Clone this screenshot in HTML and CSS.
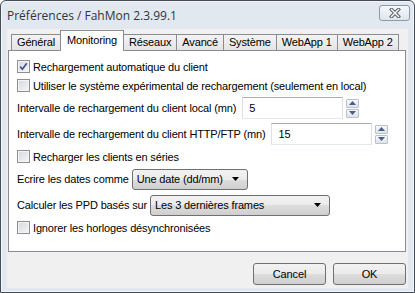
FILE: index.html
```html
<!DOCTYPE html>
<html lang="fr">
<head>
    <meta charset="UTF-8">
    <title>Préférences / FahMon 2.3.99.1</title>
    <link rel="stylesheet" href="styles.css">
</head>
<body>
    <div class="window">
        <div class="titlebar">
            <span class="title">Préférences / FahMon 2.3.99.1</span>
            <span class="close">
                <svg width="12" height="10" viewBox="0 0 12 10">
                    <path d="M2.5 1.5 L9.5 8.5 M9.5 1.5 L2.5 8.5" stroke="#535d6c" stroke-width="3.4" stroke-linecap="square"/>
                    <path d="M2.5 1.5 L9.5 8.5 M9.5 1.5 L2.5 8.5" stroke="#ffffff" stroke-width="1.4" stroke-linecap="square"/>
                </svg>
            </span>
        </div>
        <div class="client">
            <div class="tabs">
                <span class="tab">Général</span>
                <span class="tab active">Monitoring</span>
                <span class="tab">Réseaux</span>
                <span class="tab">Avancé</span>
                <span class="tab">Système</span>
                <span class="tab">WebApp 1</span>
                <span class="tab">WebApp 2</span>
            </div>
            <div class="panel">
                <div class="check-row">
                    <span class="checkbox">
                        <svg width="9" height="9" viewBox="0 0 9 9"><path d="M1.2 4.6 L3.4 7.2 L7.8 1.2" fill="none" stroke="#3d5290" stroke-width="1.7"/></svg>
                    </span>
                    Rechargement automatique du client
                </div>
                <div class="check-row">
                    <span class="checkbox"></span>
                    Utiliser le système expérimental de rechargement (seulement en local)
                </div>
                <div class="field-row">
                    <span class="label">Intervalle de rechargement du client local (mn)</span>
                    <span class="textbox">5</span>
                    <span class="spin">
                        <span class="spin-btn"><svg width="7" height="4" viewBox="0 0 7 4"><path d="M0 4 L3.5 0 L7 4 Z" fill="#4b5f86"/></svg></span>
                        <span class="spin-btn"><svg width="7" height="4" viewBox="0 0 7 4"><path d="M0 0 L7 0 L3.5 4 Z" fill="#4b5f86"/></svg></span>
                    </span>
                </div>
                <div class="field-row">
                    <span class="label">Intervalle de rechargement du client HTTP/FTP (mn)</span>
                    <span class="textbox">15</span>
                    <span class="spin">
                        <span class="spin-btn"><svg width="7" height="4" viewBox="0 0 7 4"><path d="M0 4 L3.5 0 L7 4 Z" fill="#4b5f86"/></svg></span>
                        <span class="spin-btn"><svg width="7" height="4" viewBox="0 0 7 4"><path d="M0 0 L7 0 L3.5 4 Z" fill="#4b5f86"/></svg></span>
                    </span>
                </div>
                <div class="check-row">
                    <span class="checkbox"></span>
                    Recharger les clients en séries
                </div>
                <div class="field-row">
                    <span class="label combo-label">Ecrire les dates comme</span>
                    <span class="combo combo-date">
                        Une date (dd/mm)
                        <svg width="7" height="4" viewBox="0 0 7 4"><path d="M0 0 L7 0 L3.5 4 Z" fill="#000"/></svg>
                    </span>
                </div>
                <div class="field-row">
                    <span class="label combo-label">Calculer les PPD basés sur</span>
                    <span class="combo combo-ppd">
                        Les 3 dernières frames
                        <svg width="7" height="4" viewBox="0 0 7 4"><path d="M0 0 L7 0 L3.5 4 Z" fill="#000"/></svg>
                    </span>
                </div>
                <div class="check-row">
                    <span class="checkbox"></span>
                    Ignorer les horloges désynchronisées
                </div>
            </div>
            <div class="buttons">
                <span class="btn">Cancel</span>
                <span class="btn">OK</span>
            </div>
        </div>
    </div>
</body>
</html>
```

FILE: styles.css
```css
body {
    margin: 0;
    font-family: "Liberation Sans", Arial, sans-serif;
    font-size: 11px;
    letter-spacing: -0.15px;
    color: #000;
    background: #fff;
}
.window {
    width: 415px;
    height: 293px;
    box-sizing: border-box;
    border: 1px solid #434c58;
    border-radius: 6px 6px 0 0;
    background: #e1e8f0;
    box-shadow: inset 0 0 0 1px #f4f7fa;
    padding: 0 6px 4px 6px;
    display: flex;
    flex-direction: column;
}
.titlebar {
    height: 28px;
    display: flex;
    justify-content: space-between;
    align-items: flex-start;
}
.title {
    font-family: "Open Sans", "Liberation Sans", sans-serif;
    font-size: 12px;
    letter-spacing: 0;
    color: #30353c;
    margin-top: 6px;
}
.close {
    width: 31px;
    height: 16px;
    box-sizing: border-box;
    margin-top: 4px;
    margin-right: -2px;
    border: 1px solid #8d98a8;
    border-radius: 3px;
    background: linear-gradient(#f6f8fb, #dfe5ec);
    display: flex;
    align-items: center;
    justify-content: center;
}
.client {
    flex: 1;
    background: #f0f0f0;
    padding: 1px 2px 0 1px;
    display: flex;
    flex-direction: column;
}
.tabs {
    height: 21px;
    display: flex;
    align-items: flex-end;
    padding-left: 4px;
    margin-bottom: -1px;
    position: relative;
    z-index: 1;
}
.tab {
    flex-shrink: 0;
    white-space: nowrap;
    height: 15px;
    line-height: 15px;
    padding: 0 5px;
    margin-bottom: 1px;
    border: 1px solid #898c95;
    border-bottom: none;
    background: linear-gradient(#f3f3f3, #e4e4e4);
    margin-left: -1px;
}
.tab.active {
    height: 20px;
    line-height: 19px;
    margin-bottom: 0;
    padding: 0 6px;
    background: #fff;
    position: relative;
    z-index: 2;
}
.panel {
    height: 202px;
    box-sizing: border-box;
    border: 1px solid #898c95;
    background: #fff;
    padding: 6px 0 0 8px;
}
.check-row {
    height: 19px;
    display: flex;
    align-items: center;
}
.checkbox {
    width: 13px;
    height: 13px;
    box-sizing: border-box;
    border: 1px solid #8e8f8f;
    background: linear-gradient(135deg, #d4d7dc, #f7f7f7);
    box-shadow: inset 0 0 0 1px #f4f4f4;
    margin-right: 3px;
    display: flex;
    align-items: center;
    justify-content: center;
}
.field-row {
    height: 26px;
    display: flex;
    align-items: center;
}
.label {
    margin-right: 6px;
}
.combo-label {
    margin-right: 3px;
}
.textbox {
    width: 101px;
    height: 22px;
    box-sizing: border-box;
    border: 1px solid #dbdfe6;
    border-top-color: #abadb3;
    border-bottom-color: #e3e9ef;
    padding-left: 6px;
    line-height: 20px;
    background: #fff;
}
.spin {
    margin-left: 3px;
    display: flex;
    flex-direction: column;
    gap: 1px;
}
.spin-btn {
    width: 13px;
    height: 9px;
    box-sizing: border-box;
    border: 1px solid #b9c1cc;
    border-radius: 1px;
    background: linear-gradient(#f5f7fa, #dfe4eb);
    display: flex;
    align-items: center;
    justify-content: center;
}
.combo {
    height: 21px;
    box-sizing: border-box;
    border: 1px solid #707070;
    border-radius: 3px;
    background: linear-gradient(#f2f2f2, #ebebeb 50%, #dddddd 50%, #cfcfcf);
    padding: 0 8px 0 4px;
    display: flex;
    align-items: center;
    justify-content: space-between;
}
.combo-date {
    width: 116px;
}
.combo-ppd {
    width: 180px;
}
.buttons {
    margin-top: 11px;
    display: flex;
    justify-content: flex-end;
    gap: 7px;
}
.btn {
    width: 73px;
    height: 22px;
    box-sizing: border-box;
    border: 1px solid #707070;
    border-radius: 3px;
    background: linear-gradient(#f2f2f2, #ebebeb 50%, #dddddd 50%, #cfcfcf);
    display: flex;
    align-items: center;
    justify-content: center;
}
```
